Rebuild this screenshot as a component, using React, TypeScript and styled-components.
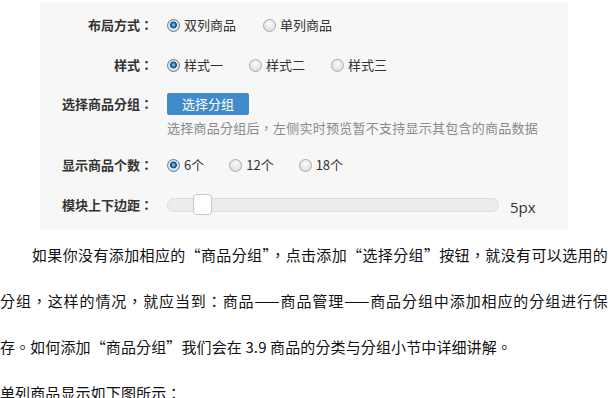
import React from 'react'
import styled, { createGlobalStyle } from 'styled-components'

const Global = createGlobalStyle`
  html, body {
    margin: 0;
    padding: 0;
    background: #fff;
  }
  body {
    font-family: "Noto Sans CJK TC", "Noto Sans CJK SC", "Noto Sans", sans-serif;
    overflow: hidden;
  }
`;

const Panel = styled.div`
  margin: 3px 0 0 40px;
  width: 528px;
  box-sizing: border-box;
  background: #f7f7f7;
  padding: 10px 0 12px;
  display: flex;
  flex-direction: column;
  gap: 16px;
`;

const Row = styled.div`
  display: grid;
  grid-template-columns: 113px 1fr;
  column-gap: 14px;
  align-items: ${p => (p.$top ? 'start' : 'center')};
  min-height: 24px;
`;

const Label = styled.div`
  text-align: right;
  font-size: 13px;
  line-height: 22px;
  font-weight: 600;
  color: #333;
  white-space: nowrap;
`;

const Group = styled.div`
  display: flex;
  align-items: center;
  gap: ${p => p.$gap ?? 26}px;
`;

const Option = styled.label`
  display: flex;
  align-items: center;
  gap: 4px;
  font-family: "Noto Sans CJK SC", sans-serif;
  font-size: 13px;
  color: #333;
  line-height: 20px;
  white-space: nowrap;
`;

const Dot = styled.span`
  width: 11px;
  height: 11px;
  border-radius: 50%;
  flex: none;
  border: 1px solid ${p => (p.$on ? '#5f7d97' : '#a9a9a9')};
  background: ${p =>
    p.$on
      ? 'radial-gradient(circle at 50% 45%, #6fb3e8 0 1.2px, #1d5d96 2px 3.2px, #dfe7ee 3.8px, #c9d2da 100%)'
      : 'radial-gradient(circle at 50% 35%, #fbfbfb 0, #e2e2e2 70%, #cfcfcf 100%)'};
`;

const Stack = styled.div`
  display: flex;
  flex-direction: column;
  align-items: flex-start;
  gap: 4px;
`;

const Button = styled.button`
  width: 82px;
  height: 22px;
  padding: 0;
  border: none;
  border-radius: 2px;
  background: #428bca;
  color: #fff;
  font-family: "Noto Sans CJK SC", sans-serif;
  font-size: 13px;
  line-height: 22px;
`;

const Hint = styled.div`
  font-size: 13px;
  line-height: 18px;
  letter-spacing: 0.25px;
  color: #8a8a8a;
  white-space: nowrap;
`;

const SliderWrap = styled.div`
  display: flex;
  align-items: center;
  gap: 11px;
`;

const Track = styled.div`
  position: relative;
  width: 332px;
  height: 14px;
  box-sizing: border-box;
  border: 1px solid #dedede;
  border-radius: 7px;
  background: #ececec;
`;

const Thumb = styled.div`
  position: absolute;
  top: -5px;
  width: 19px;
  height: 21px;
  box-sizing: border-box;
  border: 1px solid #c8c8c8;
  border-radius: 4px;
  background: #fff;
`;

const Value = styled.span`
  font-family: "Open Sans", "Liberation Sans", sans-serif;
  font-size: 15px;
  color: #333;
  position: relative;
  top: 2px;
`;

const Article = styled.div`
  margin-top: 3px;
  font-size: 15px;
  line-height: 46px;
  letter-spacing: 0.12px;
  color: #111;
`;

const Para = styled.p`
  margin: 0;
  text-align: justify;
  text-indent: ${p => (p.$indent ? '32px' : '0')};
`;

type Opt = { text: string; on?: boolean };

const Radios = ({ items, gap }: { items: Opt[]; gap?: number }) => (
  <Group $gap={gap}>
    {items.map(o => (
      <Option key={o.text}>
        <Dot $on={o.on} />
        {o.text}
      </Option>
    ))}
  </Group>
);

const App = () => {
  const pos = 25;
  return (
    <>
      <Global />
      <Panel>
        <Row>
          <Label>布局方式：</Label>
          <Radios gap={27} items={[{ text: '双列商品', on: true }, { text: '单列商品' }]} />
        </Row>
        <Row>
          <Label>样式：</Label>
          <Radios items={[{ text: '样式一', on: true }, { text: '样式二' }, { text: '样式三' }]} />
        </Row>
        <Row $top>
          <Label>选择商品分组：</Label>
          <Stack>
            <Button>选择分组</Button>
            <Hint>选择商品分组后，左侧实时预览暂不支持显示其包含的商品数据</Hint>
          </Stack>
        </Row>
        <Row>
          <Label>显示商品个数：</Label>
          <Radios gap={25} items={[{ text: '6个', on: true }, { text: '12个' }, { text: '18个' }]} />
        </Row>
        <Row>
          <Label>模块上下边距：</Label>
          <SliderWrap>
            <Track>
              <Thumb style={{ left: pos }} />
            </Track>
            <Value>5px</Value>
          </SliderWrap>
        </Row>
      </Panel>
      <Article>
        <Para $indent>
          如果你没有添加相应的“商品分组”，点击添加“选择分组”按钮，就没有可以选用的分组，这样的情况，就应当到：商品——商品管理——商品分组中添加相应的分组进行保存。如何添加“商品分组”我们会在 3.9 商品的分类与分组小节中详细讲解。
        </Para>
        <Para>单列商品显示如下图所示：</Para>
      </Article>
    </>
  );
};

export default App
